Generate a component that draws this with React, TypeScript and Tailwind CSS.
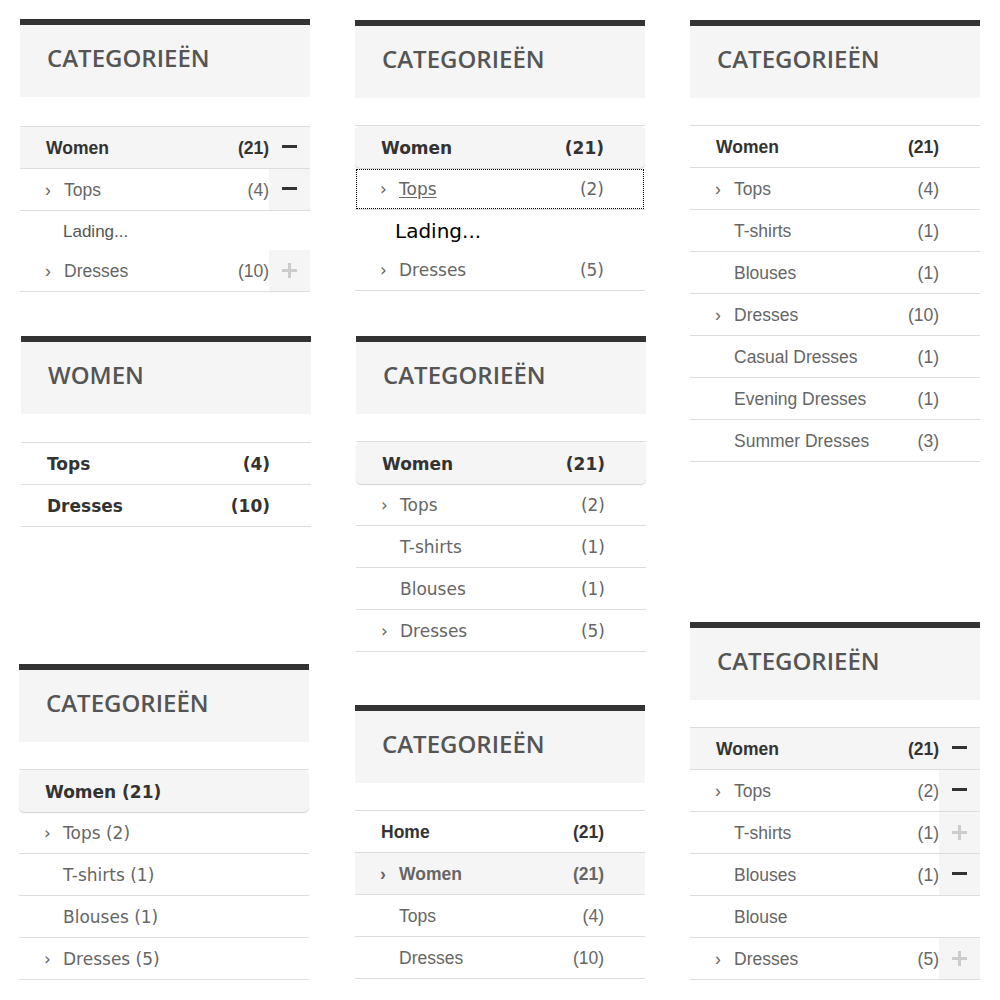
import React from 'react';

type Font = 'arial' | 'dejavu';

interface RowData {
  label: string;
  count?: string;
  level?: 0 | 1 | 2;
  toggle?: 'minus' | 'plus';
  active?: boolean;
  rounded?: boolean;
  focus?: boolean;
  inline?: boolean;
  boldChild?: boolean;
  loading?: boolean;
}

interface PanelData {
  title: string;
  font: Font;
  rows: RowData[];
  className?: string;
  listGap?: string;
}

const fontClass: Record<Font, string> = {
  arial: "font-['Liberation_Sans',Arial,sans-serif] text-[17.5px]",
  dejavu: "font-['DejaVu_Sans',Verdana,sans-serif] text-[17px]",
};

const Toggle: React.FC<{ type: 'minus' | 'plus' }> = ({ type }) =>
  type === 'minus' ? (
    <span className="block w-[15px] h-[3px] bg-[#333] -mt-[3px]" />
  ) : (
    <span className="relative block w-[15px] h-[15px]">
      <span className="absolute left-0 top-[6px] w-[15px] h-[3px] bg-[#ccc]" />
      <span className="absolute top-0 left-[6px] w-[3px] h-[15px] bg-[#ccc]" />
    </span>
  );

const Row: React.FC<{ row: RowData; font: Font }> = ({ row, font }) => {
  if (row.loading) {
    return font === 'arial' ? (
      <div className="h-[39px] flex items-center pl-[43px] pt-[2px] text-[17px] text-[#555]">Lading...</div>
    ) : (
      <div className="h-[39px] flex items-center pl-[40px] pt-[3px] text-[20px] text-black">Lading...</div>
    );
  }

  const level = row.level ?? 0;
  const top = level === 0;
  const bold = top || row.boldChild;
  const color = top ? 'text-[#333]' : 'text-[#666]';
  const pad = level === 0 ? 'pl-[26px]' : level === 1 ? 'pl-[25px]' : 'pl-[44px]';
  const nudge = font === 'dejavu' ? 'pt-[3px]' : 'pt-[1px]';

  const box = row.rounded
    ? 'h-[42px] rounded-[5px] bg-[#f5f5f5] shadow-[0_1px_1px_rgba(0,0,0,0.18)]'
    : `h-[42px] border-b border-[#ddd] ${row.active ? 'bg-[#f5f5f5]' : ''}`;

  const label = (
    <span className={row.focus ? 'underline underline-offset-2' : ''}>
      {level === 1 && (
        <span className={`inline-block w-[19px] ${row.boldChild ? 'font-bold' : ''}`}>›</span>
      )}
      {row.label}
      {row.inline && row.count && ` ${row.count}`}
    </span>
  );

  return (
    <div
      className={`${box} flex items-center ${pad} ${color} ${bold ? 'font-bold' : ''} ${
        row.focus ? 'outline-1 outline-dotted outline-black -outline-offset-2' : ''
      }`}
    >
      <div className={`flex-1 whitespace-nowrap ${nudge}`}>{label}</div>
      {!row.inline && row.count && <span className={nudge}>{row.count}</span>}
      <div
        className={`w-[41px] self-stretch flex items-center justify-center ${
          row.toggle ? 'bg-[#f5f5f5]' : ''
        }`}
      >
        {row.toggle && <Toggle type={row.toggle} />}
      </div>
    </div>
  );
};

const Panel: React.FC<PanelData> = ({ title, font, rows, className = '', listGap = 'mt-[27px]' }) => (
  <div className={`w-[290px] ${className}`}>
    <div className="h-[78px] border-t-[6px] border-[#333] bg-[#f5f5f5] flex items-center pl-[27px] pb-[6px]">
      <h2 className="font-['Open_Sans',sans-serif] text-[24px] font-semibold leading-none text-[#555]">
        {title}
      </h2>
    </div>
    <div className={`${listGap} border-t border-[#ddd] ${fontClass[font]}`}>
      {rows.map((r, i) => (
        <Row key={i} row={r} font={font} />
      ))}
    </div>
  </div>
);

const T = 'CATEGORIEËN';

const columns: PanelData[][] = [
  [
    {
      title: T,
      font: 'arial',
      className: 'mt-[19px]',
      listGap: 'mt-[29px]',
      rows: [
        { label: 'Women', count: '(21)', active: true, toggle: 'minus' },
        { label: 'Tops', count: '(4)', level: 1, toggle: 'minus' },
        { label: '', loading: true },
        { label: 'Dresses', count: '(10)', level: 1, toggle: 'plus' },
      ],
    },
    {
      title: 'WOMEN',
      font: 'dejavu',
      className: 'mt-[44px] ml-px',
      listGap: 'mt-[28px]',
      rows: [
        { label: 'Tops', count: '(4)' },
        { label: 'Dresses', count: '(10)' },
      ],
    },
    {
      title: T,
      font: 'dejavu',
      className: 'mt-[137px] -ml-px',
      rows: [
        { label: 'Women', count: '(21)', rounded: true, inline: true },
        { label: 'Tops', count: '(2)', level: 1, inline: true },
        { label: 'T-shirts', count: '(1)', level: 2, inline: true },
        { label: 'Blouses', count: '(1)', level: 2, inline: true },
        { label: 'Dresses', count: '(5)', level: 1, inline: true },
      ],
    },
  ],
  [
    {
      title: T,
      font: 'dejavu',
      className: 'mt-[20px]',
      rows: [
        { label: 'Women', count: '(21)', rounded: true },
        { label: 'Tops', count: '(2)', level: 1, focus: true },
        { label: '', loading: true },
        { label: 'Dresses', count: '(5)', level: 1 },
      ],
    },
    {
      title: T,
      font: 'dejavu',
      className: 'mt-[45px] ml-px',
      rows: [
        { label: 'Women', count: '(21)', rounded: true },
        { label: 'Tops', count: '(2)', level: 1 },
        { label: 'T-shirts', count: '(1)', level: 2 },
        { label: 'Blouses', count: '(1)', level: 2 },
        { label: 'Dresses', count: '(5)', level: 1 },
      ],
    },
    {
      title: T,
      font: 'arial',
      className: 'mt-[53px]',
      rows: [
        { label: 'Home', count: '(21)' },
        { label: 'Women', count: '(21)', level: 1, active: true, boldChild: true },
        { label: 'Tops', count: '(4)', level: 2 },
        { label: 'Dresses', count: '(10)', level: 2 },
      ],
    },
  ],
  [
    {
      title: T,
      font: 'arial',
      className: 'mt-[20px]',
      rows: [
        { label: 'Women', count: '(21)' },
        { label: 'Tops', count: '(4)', level: 1 },
        { label: 'T-shirts', count: '(1)', level: 2 },
        { label: 'Blouses', count: '(1)', level: 2 },
        { label: 'Dresses', count: '(10)', level: 1 },
        { label: 'Casual Dresses', count: '(1)', level: 2 },
        { label: 'Evening Dresses', count: '(1)', level: 2 },
        { label: 'Summer Dresses', count: '(3)', level: 2 },
      ],
    },
    {
      title: T,
      font: 'arial',
      className: 'mt-[160px]',
      rows: [
        { label: 'Women', count: '(21)', active: true, toggle: 'minus' },
        { label: 'Tops', count: '(2)', level: 1, toggle: 'minus' },
        { label: 'T-shirts', count: '(1)', level: 2, toggle: 'plus' },
        { label: 'Blouses', count: '(1)', level: 2, toggle: 'minus' },
        { label: 'Blouse', level: 2 },
        { label: 'Dresses', count: '(5)', level: 1, toggle: 'plus' },
      ],
    },
  ],
];

export default function App() {
  return (
    <div className="w-[1000px] h-[1000px] bg-white flex gap-[45px] pl-[20px] overflow-hidden">
      {columns.map((col, i) => (
        <div key={i} className="w-[290px] flex flex-col">
          {col.map((p, j) => (
            <Panel key={j} {...p} />
          ))}
        </div>
      ))}
    </div>
  );
}
